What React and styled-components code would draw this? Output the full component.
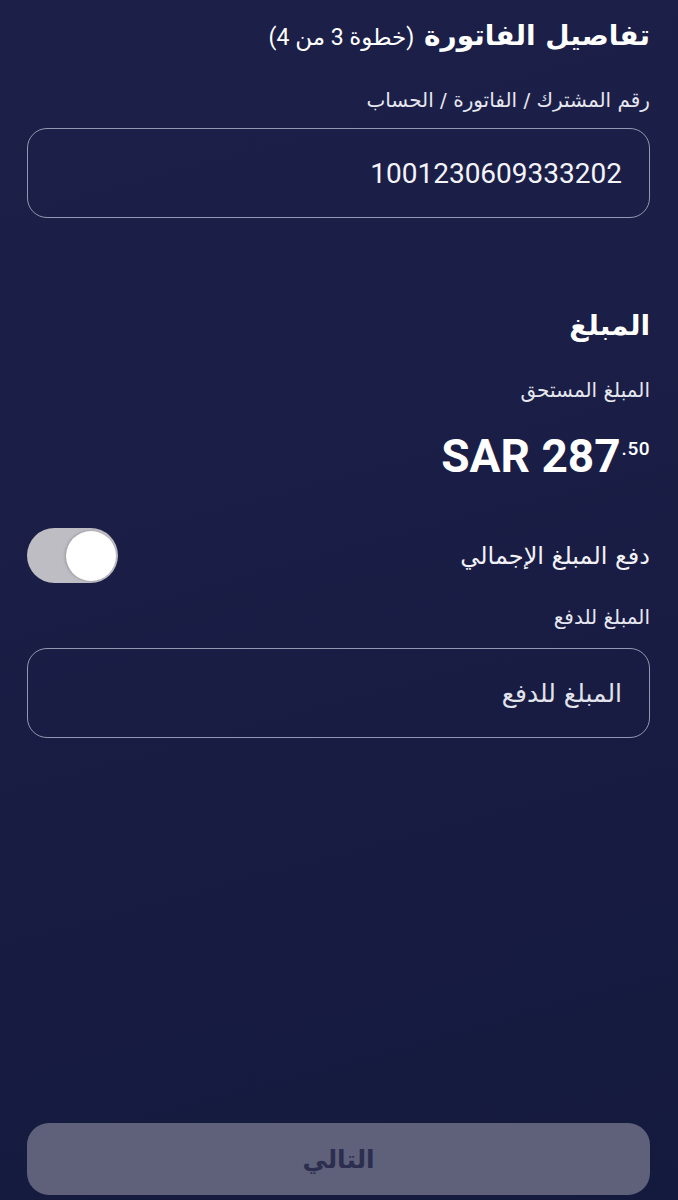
import React from "react";
import styled, { createGlobalStyle } from "styled-components";

const Global = createGlobalStyle`
  html, body { margin: 0; padding: 0; }
  body {
    background: #171b42;
    font-family: Roboto, "DejaVu Sans", sans-serif;
  }
`;

const Page = styled.div`
  direction: rtl;
  box-sizing: border-box;
  width: 678px;
  height: 1200px;
  padding: 14px 28px 5px 27px;
  display: flex;
  flex-direction: column;
  background: linear-gradient(165deg, #1c2049 0%, #1b1f47 35%, #171b42 70%, #141a3d 100%);
  color: #ffffff;
`;

const TitleRow = styled.h1`
  margin: 0;
  font-size: 28px;
  font-weight: 700;
  line-height: 44px;
  color: #ffffff;
  font-family: "DejaVu Sans", sans-serif;
`;

const TitleNote = styled.span`
  font-size: 23px;
  font-weight: 400;
  font-family: Roboto, "DejaVu Sans", sans-serif;
`;

const Label = styled.div`
  font-size: 20px;
  line-height: 28px;
  color: #e6e7ef;
  margin-top: ${(p) => p.$mt || 0}px;
  font-family: "DejaVu Sans", sans-serif;
`;

const Field = styled.div`
  box-sizing: border-box;
  height: 90px;
  margin-top: ${(p) => p.$mt || 0}px;
  border: 1.5px solid #9397b1;
  border-radius: 20px;
  display: flex;
  align-items: center;
  padding: 0 27px 0 27px;
  font-size: ${(p) => p.$size || 28}px;
  color: ${(p) => (p.$placeholder ? "#e2e3ea" : "#f4f4f8")};
  font-family: ${(p) => (p.$placeholder ? '"DejaVu Sans", sans-serif' : "Roboto, sans-serif")};
`;

const Section = styled.h2`
  margin: ${(p) => p.$mt || 0}px 0 0;
  font-size: 28px;
  line-height: 40px;
  font-weight: 700;
  font-family: "DejaVu Sans", sans-serif;
`;

const Amount = styled.div`
  direction: ltr;
  align-self: flex-start;
  margin-top: ${(p) => p.$mt || 0}px;
  font-family: Roboto, sans-serif;
  font-weight: 700;
  font-size: 46px;
  line-height: 54px;
  display: flex;
  align-items: flex-start;
`;

const Cents = styled.span`
  font-size: 19px;
  font-weight: 500;
  letter-spacing: 0.5px;
  line-height: 22px;
  margin-top: 9px;
  margin-left: 1px;
`;

const ToggleRow = styled.div`
  display: flex;
  align-items: center;
  justify-content: space-between;
  margin-top: ${(p) => p.$mt || 0}px;
`;

const ToggleLabel = styled.span`
  font-size: 24px;
  font-family: "DejaVu Sans", sans-serif;
  color: #f2f2f6;
`;

const Track = styled.div`
  width: 91px;
  height: 55px;
  border-radius: 28px;
  background: #bdbdc3;
  position: relative;
`;

const Knob = styled.div`
  position: absolute;
  top: 3px;
  left: 39px;
  width: 50px;
  height: 50px;
  border-radius: 50%;
  background: #ffffff;
  box-shadow: -1px 0 3px rgba(0, 0, 0, 0.2);
`;

const Spacer = styled.div`
  flex: 1;
`;

const NextButton = styled.button`
  box-sizing: border-box;
  height: 72px;
  width: 100%;
  border: none;
  border-radius: 22px;
  background: #5f6079;
  color: #2b2e4f;
  font-size: 25px;
  font-weight: 700;
  font-family: "DejaVu Sans", sans-serif;
  direction: rtl;
`;

export default function App() {
  return (
    <>
      <Global />
      <Page>
        <TitleRow>
          تفاصيل الفاتورة <TitleNote>(خطوة 3 من 4)</TitleNote>
        </TitleRow>
        <Label $mt={26}>رقم المشترك / الفاتورة / الحساب</Label>
        <Field $mt={14}>1001230609333202</Field>
        <Section $mt={88}>المبلغ</Section>
        <Label $mt={30}>المبلغ المستحق</Label>
        <Amount $mt={25}>
          SAR 287<Cents>.50</Cents>
        </Amount>
        <ToggleRow $mt={45}>
          <ToggleLabel>دفع المبلغ الإجمالي</ToggleLabel>
          <Track>
            <Knob />
          </Track>
        </ToggleRow>
        <Label $mt={20}>المبلغ للدفع</Label>
        <Field $mt={17} $placeholder $size={25}>المبلغ للدفع</Field>
        <Spacer />
        <NextButton>التالي</NextButton>
      </Page>
    </>
  );
}
